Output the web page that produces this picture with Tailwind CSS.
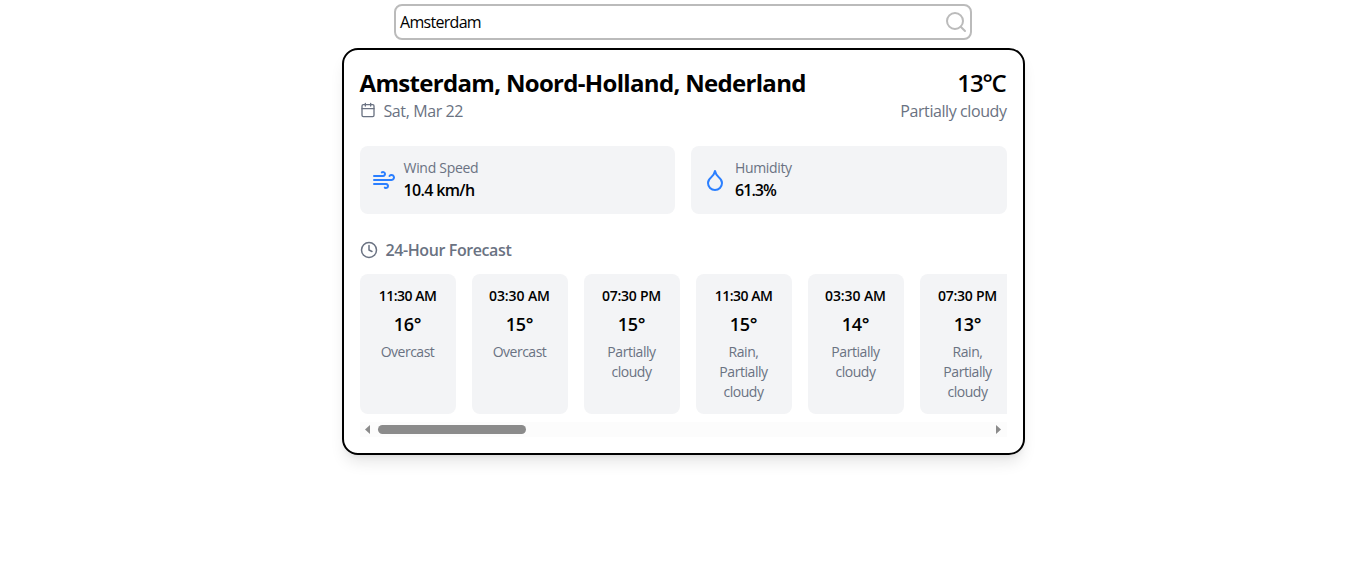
<!DOCTYPE html>
<html lang="en">
<head>
<meta charset="utf-8">
<title>Weather</title>
<script src="https://cdn.jsdelivr.net/npm/@tailwindcss/browser@4"></script>
</head>
<body class="bg-white text-black min-h-screen font-['Segoe_UI','Open_Sans','Noto_Sans',sans-serif]">
<div class="flex flex-col items-center pt-1 gap-2">
  <label class="w-[578px] h-9 border-2 border-[#bbb] rounded-lg flex items-center justify-between pl-1 pr-0.5">
    <span class="text-base tracking-[-0.7px]">Amsterdam</span>
    <svg class="size-6" viewBox="0 0 24 24" fill="none" stroke="#bbb" stroke-width="2" stroke-linecap="round"><circle cx="11" cy="11" r="8"/><path d="m21 21-4.300-4.300"/></svg>
  </label>
  <main class="w-[683px] h-[407px] border-2 border-black rounded-2xl p-4 shadow-lg flex flex-col">
    <header class="flex justify-between h-20 pt-px">
      <div>
        <h1 class="text-2xl leading-8 font-bold tracking-[-0.68px] whitespace-nowrap">Amsterdam, Noord-Holland, Nederland</h1>
        <div class="flex items-center gap-2 h-6 text-[#6a7282]">
          <svg class="size-4 -mt-0.5" viewBox="0 0 24 24" fill="none" stroke="currentColor" stroke-width="2" stroke-linecap="round" stroke-linejoin="round"><path d="M8 2v4M16 2v4"/><rect x="3" y="4" width="18" height="18" rx="2"/><path d="M3 10h18"/></svg>
          <span class="tracking-[-0.4px]">Sat, Mar 22</span>
        </div>
      </div>
      <div class="text-right">
        <p class="text-2xl leading-8 font-semibold tracking-[-1.2px] pr-px">13°C</p>
        <p class="h-6 text-[#6a7282] tracking-[-0.42px]">Partially cloudy</p>
      </div>
    </header>
    <section class="grid grid-cols-2 gap-4">
      <div class="h-[68px] rounded-lg bg-gray-100 p-3 flex items-center gap-2">
        <svg class="size-6" viewBox="0 0 24 24" fill="none" stroke="#2b7fff" stroke-width="2" stroke-linecap="round" stroke-linejoin="round"><path d="M12.8 19.6A2 2 0 1 0 14 16H2"/><path d="M17.5 8a2.5 2.5 0 1 1 2 4H2"/><path d="M9.8 4.4A2 2 0 1 1 11 8H2"/></svg>
        <div><p class="text-sm text-[#6a7282] tracking-[-0.3px]">Wind Speed</p><p class="font-semibold tracking-[-0.65px]">10.4 km/h</p></div>
      </div>
      <div class="h-[68px] rounded-lg bg-gray-100 p-3 flex items-center gap-2">
        <svg class="size-6" viewBox="0 0 24 24" fill="none" stroke="#2b7fff" stroke-width="2" stroke-linecap="round" stroke-linejoin="round"><path d="M12 22a7 7 0 0 0 7-7c0-2-1-3.9-3-5.5s-3.5-4-4-6.5c-.5 2.5-2 4.900-4 6.500C6 11.100 5 13 5 15a7 7 0 0 0 7 7z"/></svg>
        <div><p class="text-sm text-[#6a7282] tracking-[-0.35px]">Humidity</p><p class="font-semibold tracking-[-0.95px]">61.3%</p></div>
      </div>
    </section>
    <h2 class="mt-6 h-6 flex items-center gap-2 text-[#6a7282] font-semibold">
      <svg class="size-[18px]" viewBox="0 0 24 24" fill="none" stroke="currentColor" stroke-width="2" stroke-linecap="round" stroke-linejoin="round"><circle cx="12" cy="12" r="10"/><path d="M12 6v6l4 2"/></svg>
      <span class="tracking-[-0.4px]">24-Hour Forecast</span>
    </h2>
    <section class="mt-3 h-[140px] flex gap-4 overflow-hidden text-center text-sm">
      <article class="w-24 shrink-0 rounded-lg bg-gray-100 p-3"><p class="-mx-2 font-semibold tracking-[-0.5px]">11:30 AM</p><p class="my-1 text-lg leading-7 font-semibold tracking-[-0.3px]">16°</p><p class="text-[#6a7282] tracking-[-0.5px]">Overcast</p></article>
      <article class="w-24 shrink-0 rounded-lg bg-gray-100 p-3"><p class="-mx-2 font-semibold tracking-[-0.1px]">03:30 AM</p><p class="my-1 text-lg leading-7 font-semibold tracking-[-0.3px]">15°</p><p class="text-[#6a7282] tracking-[-0.5px]">Overcast</p></article>
      <article class="w-24 shrink-0 rounded-lg bg-gray-100 p-3"><p class="-mx-2 font-semibold tracking-[-0.25px]">07:30 PM</p><p class="my-1 text-lg leading-7 font-semibold tracking-[-0.3px]">15°</p><p class="text-[#6a7282] tracking-[-0.45px]">Partially<br>cloudy</p></article>
      <article class="w-24 shrink-0 rounded-lg bg-gray-100 p-3"><p class="-mx-2 font-semibold tracking-[-0.5px]">11:30 AM</p><p class="my-1 text-lg leading-7 font-semibold tracking-[-0.3px]">15°</p><p class="text-[#6a7282] tracking-[-0.45px]">Rain,<br>Partially<br>cloudy</p></article>
      <article class="w-24 shrink-0 rounded-lg bg-gray-100 p-3"><p class="-mx-2 font-semibold tracking-[-0.1px]">03:30 AM</p><p class="my-1 text-lg leading-7 font-semibold tracking-[-0.3px]">14°</p><p class="text-[#6a7282] tracking-[-0.45px]">Partially<br>cloudy</p></article>
      <article class="w-24 shrink-0 rounded-lg bg-gray-100 p-3"><p class="-mx-2 font-semibold tracking-[-0.25px]">07:30 PM</p><p class="my-1 text-lg leading-7 font-semibold tracking-[-0.3px]">13°</p><p class="text-[#6a7282] tracking-[-0.45px]">Rain,<br>Partially<br>cloudy</p></article>
    </section>
    <div class="mt-2 h-[15px] bg-[#fcfcfc] flex items-center pl-[5px] pr-[6px]">
      <svg class="w-[5px] h-[9px]" viewBox="0 0 5 9" fill="#8b8b8b"><path d="M5 0v9L0 4.500z"/></svg>
      <div class="ml-2 w-[148px] h-[9px] rounded-full bg-[#8b8b8b]"></div>
      <svg class="ml-auto w-[5px] h-[9px]" viewBox="0 0 5 9" fill="#8b8b8b"><path d="M0 0v9l5-4.500z"/></svg>
    </div>
  </main>
</div>
</body>
</html>
